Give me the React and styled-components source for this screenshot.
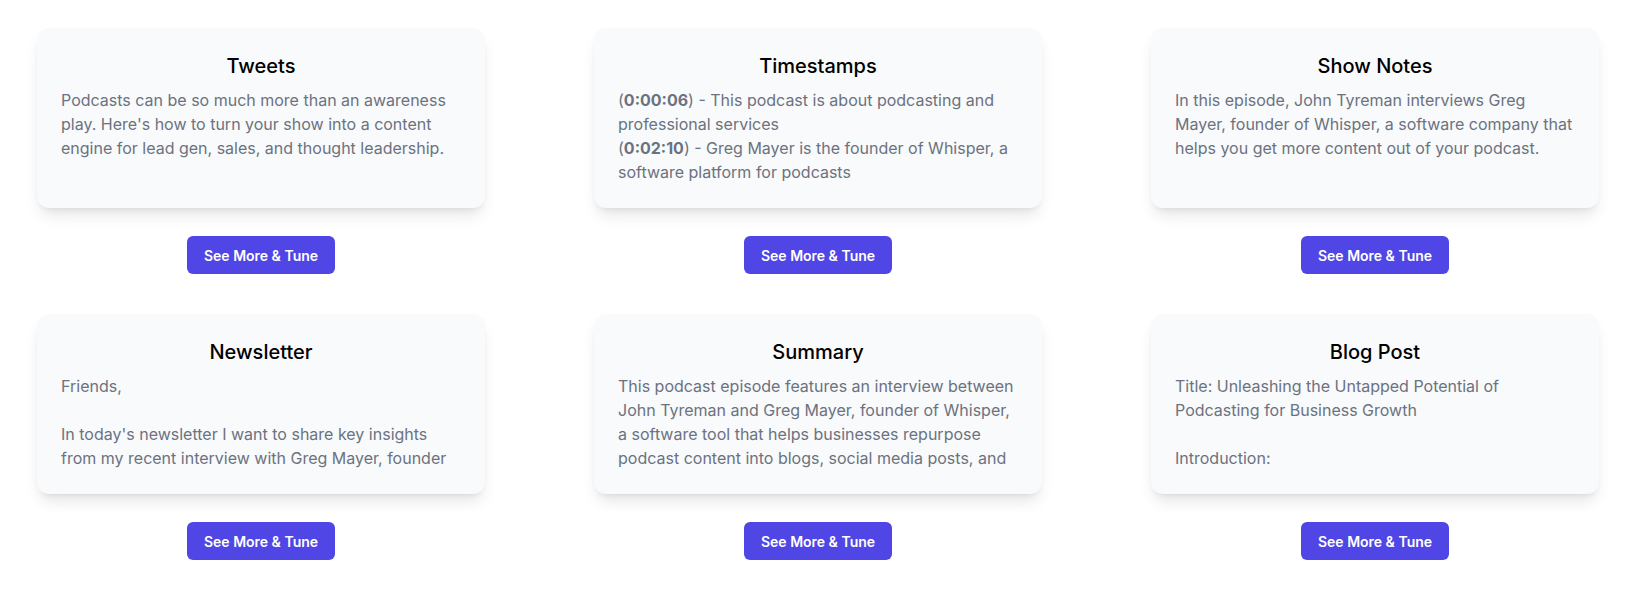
import React from "react";
import styled, { createGlobalStyle } from "styled-components";

const GlobalStyle = createGlobalStyle`
  body {
    margin: 0;
    background: #ffffff;
    font-family: Inter, "Noto Sans", sans-serif;
  }
`;

const outputs = [
  {
    title: "Tweets",
    body: "Podcasts can be so much more than an awareness play. Here's how to turn your show into a content engine for lead gen, sales, and thought leadership.",
  },
  {
    title: "Timestamps",
    stamps: [
      ["0:00:06", "This podcast is about podcasting and professional services"],
      ["0:02:10", "Greg Mayer is the founder of Whisper, a software platform for podcasts"],
    ],
  },
  {
    title: "Show Notes",
    body: "In this episode, John Tyreman interviews Greg Mayer, founder of Whisper, a software company that helps you get more content out of your podcast.",
  },
  {
    title: "Newsletter",
    body: "Friends,\n\nIn today's newsletter I want to share key insights from my recent interview with Greg Mayer, founder",
  },
  {
    title: "Summary",
    body: "This podcast episode features an interview between John Tyreman and Greg Mayer, founder of Whisper, a software tool that helps businesses repurpose podcast content into blogs, social media posts, and",
  },
  {
    title: "Blog Post",
    body: "Title: Unleashing the Untapped Potential of Podcasting for Business Growth\n\nIntroduction:",
  },
];

function App() {
  return (
    <>
      <GlobalStyle />
      <Grid>
        {outputs.map(({ title, body, stamps }) => (
          <Cell key={title}>
            <Card>
              <CardTitle>{title}</CardTitle>
              <CardBody>
                {stamps
                  ? stamps.map(([time, text]) => (
                      <div key={time}>
                        (<b>{time}</b>) - {text}
                      </div>
                    ))
                  : body}
              </CardBody>
            </Card>
            <TuneButton>See More &amp; Tune</TuneButton>
          </Cell>
        ))}
      </Grid>
    </>
  );
}

const Grid = styled.div`
  display: grid;
  grid-template-columns: repeat(3, 448px);
  justify-content: space-between;
  row-gap: 40px;
  padding: 28px 44px 40px 37px;
`;

const Cell = styled.div`
  display: flex;
  flex-direction: column;
  align-items: center;
  gap: 28px;
`;

const Card = styled.div`
  box-sizing: border-box;
  width: 100%;
  height: 180px;
  padding: 24px;
  background: #f9fafb;
  border-radius: 12px;
  box-shadow: 0 10px 15px -3px rgba(0, 0, 0, 0.1),
    0 4px 6px -4px rgba(0, 0, 0, 0.1);
`;

const CardTitle = styled.div`
  font-size: 20px;
  line-height: 28px;
  font-weight: 500;
  color: #000000;
  text-align: center;
`;

const CardBody = styled.div`
  margin-top: 8px;
  height: 96px;
  overflow: hidden;
  font-size: 16px;
  line-height: 24px;
  color: #6b7280;
  white-space: pre-line;

  b {
    font-weight: 700;
  }
`;

const TuneButton = styled.button`
  height: 38px;
  padding: 0 17px;
  border: none;
  border-radius: 6px;
  background: #4f46e5;
  color: #ffffff;
  font-family: Inter, "Noto Sans", sans-serif;
  font-size: 14px;
  font-weight: 600;
  cursor: pointer;
`;

export default App;
